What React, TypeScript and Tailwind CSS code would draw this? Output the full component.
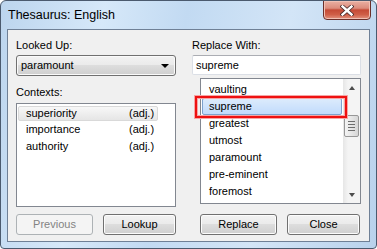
import React from "react";

const font = { fontFamily: '"Liberation Sans", Arial, sans-serif' };

const btn =
  "flex h-[21px] items-center justify-center rounded-[3px] border border-[#707070] bg-[linear-gradient(#f2f2f2,#ebebeb_45%,#dddddd_50%,#cfcfcf)] text-[11px] text-black shadow-[inset_0_0_0_1px_#fcfcfc]";

const contexts = [
  { word: "superiority", pos: "(adj.)" },
  { word: "importance", pos: "(adj.)" },
  { word: "authority", pos: "(adj.)" },
];

const words = [
  "vaulting",
  "supreme",
  "greatest",
  "utmost",
  "paramount",
  "pre-eminent",
  "foremost",
];

const CloseX = () => (
  <svg width="14" height="11" viewBox="0 0 14 11">
    <path
      d="M2.5 1.5 L11.5 9.5 M11.5 1.5 L2.5 9.5"
      stroke="#4a2a2a"
      strokeWidth="4"
      strokeLinecap="square"
    />
    <path
      d="M2.5 1.5 L11.5 9.5 M11.5 1.5 L2.5 9.5"
      stroke="#ffffff"
      strokeWidth="2.4"
      strokeLinecap="square"
    />
  </svg>
);

const Scrollbar = () => (
  <div className="flex w-[17px] flex-col items-center bg-[linear-gradient(to_right,#e6e6e6,#f4f4f4_30%,#f4f4f4)]">
    <div className="flex h-[17px] w-full items-center justify-center">
      <div className="h-0 w-0 border-x-[3.5px] border-b-[4px] border-x-transparent border-b-[#4d4d4d]" />
    </div>
    <div className="mt-[19px] flex h-[22px] w-[15px] flex-col items-center justify-center gap-[2px] rounded-[2px] border border-[#979797] bg-[linear-gradient(to_right,#f4f4f4,#e6e6e6_50%,#d6d6d6)]">
      <div className="h-px w-[7px] bg-[#6d6d6d]" />
      <div className="h-px w-[7px] bg-[#6d6d6d]" />
      <div className="h-px w-[7px] bg-[#6d6d6d]" />
      <div className="h-px w-[7px] bg-[#6d6d6d]" />
    </div>
    <div className="flex-1" />
    <div className="flex h-[17px] w-full items-center justify-center">
      <div className="h-0 w-0 border-x-[3.5px] border-t-[4px] border-x-transparent border-t-[#4d4d4d]" />
    </div>
  </div>
);

export default function App() {
  return (
    <div
      style={font}
      className="flex h-[249px] w-[377px] flex-col overflow-hidden rounded-t-[6px] rounded-b-[4px] border border-[#4b5a6e] bg-[linear-gradient(100deg,#bcd5ee,#d6e8f9_25%,#c2daf2_45%,#d3e5f7_70%,#b9d2ec)]"
    >
      <div className="flex h-[28px] shrink-0 items-start justify-between">
        <div className="ml-[7px] mt-[7px] text-[12.5px] leading-[14px] text-black">
          Thesaurus: English
        </div>
        <div className="mr-[5px] mt-[-1px] flex h-[20px] w-[48px] items-center justify-center rounded-b-[4px] border border-[#6b2f2a] bg-[linear-gradient(#eab0a3,#dc8c7c_40%,#c54a36_50%,#cf5e47_75%,#e3927f)] shadow-[inset_0_0_0_1px_#f0c0b4]">
          <CloseX />
        </div>
      </div>

      <div className="mx-[6px] flex h-[213px] shrink-0 border border-[#6f8096] bg-[#f0f0f0] px-[8px] pt-[9px]">
        {/* left column */}
        <div className="flex w-[160px] flex-col">
          <div className="text-[11px] leading-[13px] text-black">Looked Up:</div>
          <div className="mt-[3px] flex h-[21px] items-center justify-between rounded-[3px] border border-[#707070] bg-[linear-gradient(#f2f2f2,#ebebeb_45%,#dddddd_50%,#cfcfcf)] pl-[4px] pr-[6px] text-[11px] shadow-[inset_0_0_0_1px_#fafafa]">
            <span>paramount</span>
            <div className="h-0 w-0 border-x-[4px] border-t-[4px] border-x-transparent border-t-black" />
          </div>
          <div className="mt-[10px] text-[11px] leading-[13px] text-black">Contexts:</div>
          <div className="mt-[4px] flex h-[104px] flex-col border border-[#828790] bg-white text-[11px]">
            {contexts.map((c, i) => (
              <div
                key={c.word}
                className={
                  i === 0
                    ? "ml-[1px] mt-[2px] flex h-[15px] w-[140px] items-center rounded-[2px] border border-[#d9d9d9] bg-[linear-gradient(#f8f8f8,#e5e5e5)] pl-[7px]"
                    : "ml-[1px] flex h-[17px] w-[140px] items-center pl-[8px]"
                }
              >
                <span className="w-[103px]">{c.word}</span>
                <span>{c.pos}</span>
              </div>
            ))}
          </div>
          <div className="mt-[7px] flex gap-[10px]">
            <div className="flex h-[21px] w-[77px] items-center justify-center rounded-[3px] border border-[#adb2b5] bg-[#f4f4f4] text-[11px] text-[#838383]">
              Previous
            </div>
            <div className={btn + " w-[73px]"}>Lookup</div>
          </div>
        </div>

        {/* right column */}
        <div className="ml-[16px] flex w-[169px] flex-col">
          <div className="text-[11px] leading-[13px] text-black">Replace With:</div>
          <div className="mt-[3px] flex h-[20px] items-center rounded-[2px] border border-[#dbdfe6] border-t-[#abadb3] bg-white pl-[3px] text-[11px]">
            supreme
          </div>
          <div className="relative ml-[8px] mt-[3px] flex h-[126px] border border-[#828790] bg-white text-[11px]">
            <div className="flex w-[143px] flex-col overflow-hidden pt-[2px]">
              {words.map((w, i) => (
                <div
                  key={w}
                  className={
                    i === 1
                      ? "mx-[1px] flex h-[17px] shrink-0 items-center rounded-[2px] border border-[#7da2ce] bg-[linear-gradient(#dcebfc,#c1dbfc)] pl-[6px]"
                      : "flex h-[17px] shrink-0 items-center pl-[8px]"
                  }
                >
                  {w}
                </div>
              ))}
            </div>
            <Scrollbar />
            <div className="absolute left-[-6px] top-[17px] h-[22px] w-[152px] border-2 border-[#ee1111] shadow-[0_0_0_1px_#f6a5a5,inset_0_0_0_1px_#f6a5a5]" />
          </div>
          <div className="ml-[8px] mt-[10px] flex gap-[10px]">
            <div className={btn + " w-[77px]"}>Replace</div>
            <div className={btn + " w-[73px]"}>Close</div>
          </div>
        </div>
      </div>
    </div>
  );
}
